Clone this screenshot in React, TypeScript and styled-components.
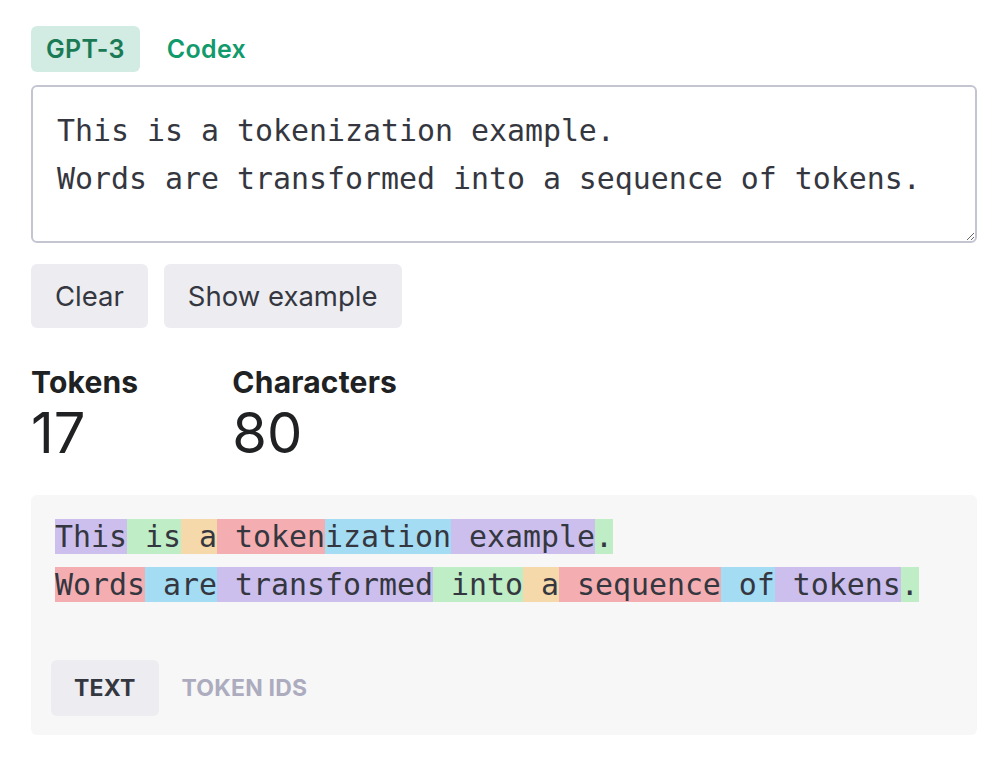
import React, { useState } from 'react';
import styled, { createGlobalStyle } from 'styled-components';

const GlobalStyle = createGlobalStyle`
  html, body {
    margin: 0;
    padding: 0;
    background: #ffffff;
  }
  body {
    font-family: Inter, "Noto Sans", "Liberation Sans", sans-serif;
    color: #202123;
  }
`;

const mono = `"DejaVu Sans Mono", "Liberation Mono", monospace`;

const tokenColors = [
  'rgba(107, 64, 216, 0.3)',
  'rgba(104, 222, 122, 0.4)',
  'rgba(244, 172, 54, 0.4)',
  'rgba(239, 65, 70, 0.4)',
  'rgba(39, 181, 234, 0.4)',
];

const tokens = [
  'This', ' is', ' a', ' token', 'ization', ' example', '.', '\n',
  'Words', ' are', ' transformed', ' into', ' a', ' sequence', ' of', ' tokens', '.',
];

const sample = 'This is a tokenization example.\nWords are transformed into a sequence of tokens.';

const Page = styled.div`
  padding: 26px 27px 26px 31px;
  display: flex;
  flex-direction: column;
`;

const ModelTabs = styled.div`
  display: flex;
  align-items: center;
  gap: 12px;
  margin-bottom: 13px;
`;

const ModelTab = styled.button<{ $active?: boolean }>`
  height: 46px;
  padding: 0 15px;
  border: none;
  border-radius: 6px;
  font-family: inherit;
  font-size: 25px;
  font-weight: 600;
  letter-spacing: 0.3px;
  cursor: pointer;
  color: ${(p) => (p.$active ? '#1b7a56' : '#119a6c')};
  background: ${(p) => (p.$active ? '#d2ece3' : 'transparent')};
`;

const Input = styled.textarea`
  box-sizing: border-box;
  width: 100%;
  height: 158px;
  padding: 20px 24px;
  border: 2px solid #c5c5d2;
  border-radius: 6px;
  font-family: ${mono};
  font-size: 29.9px;
  line-height: 48px;
  color: #353740;
  resize: vertical;
  outline: none;
  white-space: pre;
  overflow: hidden;
`;

const ButtonRow = styled.div`
  display: flex;
  gap: 16px;
  margin-top: 21px;
`;

const Button = styled.button`
  height: 64px;
  padding: 0 24px;
  border: none;
  border-radius: 6px;
  background: #ececf1;
  color: #353740;
  font-family: inherit;
  font-size: 27.5px;
  cursor: pointer;
`;

const Stats = styled.div`
  display: flex;
  gap: 94px;
  margin-top: 35px;
`;

const Stat = styled.div`
  display: flex;
  flex-direction: column;
`;

const StatLabel = styled.div`
  font-size: 30px;
  font-weight: 700;
  line-height: 38px;
  letter-spacing: 0.2px;
  color: #202123;
`;

const StatValue = styled.div`
  font-size: 56px;
  font-weight: 400;
  line-height: 64px;
  color: #202123;
`;

const Output = styled.div`
  margin-top: 30px;
  background: #f7f7f8;
  border-radius: 6px;
  padding: 18px 24px 19px 24px;
`;

const TokenText = styled.div`
  font-family: ${mono};
  font-size: 29.9px;
  line-height: 48px;
  color: #353740;
  white-space: pre;
`;

const Token = styled.span<{ $color: string }>`
  background: ${(p) => p.$color};
`;

const ViewTabs = styled.div`
  display: flex;
  margin: 51px 0 0 -4px;
`;

const ViewTab = styled.button<{ $active?: boolean }>`
  height: 56px;
  padding: 0 23px;
  border: none;
  border-radius: 6px;
  font-family: inherit;
  font-size: 23px;
  font-weight: 700;
  letter-spacing: 0.2px;
  text-transform: uppercase;
  cursor: pointer;
  color: ${(p) => (p.$active ? '#353740' : '#acacbe')};
  background: ${(p) => (p.$active ? '#ececf1' : 'transparent')};
`;

const App: React.FC = () => {
  const [text, setText] = useState(sample);
  const [view, setView] = useState<'text' | 'ids'>('text');

  return (
    <>
      <GlobalStyle />
      <Page>
        <ModelTabs>
          <ModelTab $active>GPT-3</ModelTab>
          <ModelTab>Codex</ModelTab>
        </ModelTabs>
        <Input value={text} onChange={(e) => setText(e.target.value)} spellCheck={false} />
        <ButtonRow>
          <Button onClick={() => setText('')}>Clear</Button>
          <Button onClick={() => setText(sample)}>Show example</Button>
        </ButtonRow>
        <Stats>
          <Stat>
            <StatLabel>Tokens</StatLabel>
            <StatValue>17</StatValue>
          </Stat>
          <Stat>
            <StatLabel>Characters</StatLabel>
            <StatValue>80</StatValue>
          </Stat>
        </Stats>
        <Output>
          <TokenText>
            {tokens.map((t, i) => (
              <Token key={i} $color={tokenColors[i % tokenColors.length]}>
                {t}
              </Token>
            ))}
          </TokenText>
          <ViewTabs>
            <ViewTab $active={view === 'text'} onClick={() => setView('text')}>Text</ViewTab>
            <ViewTab $active={view === 'ids'} onClick={() => setView('ids')}>Token IDs</ViewTab>
          </ViewTabs>
        </Output>
      </Page>
    </>
  );
};

export default App;
